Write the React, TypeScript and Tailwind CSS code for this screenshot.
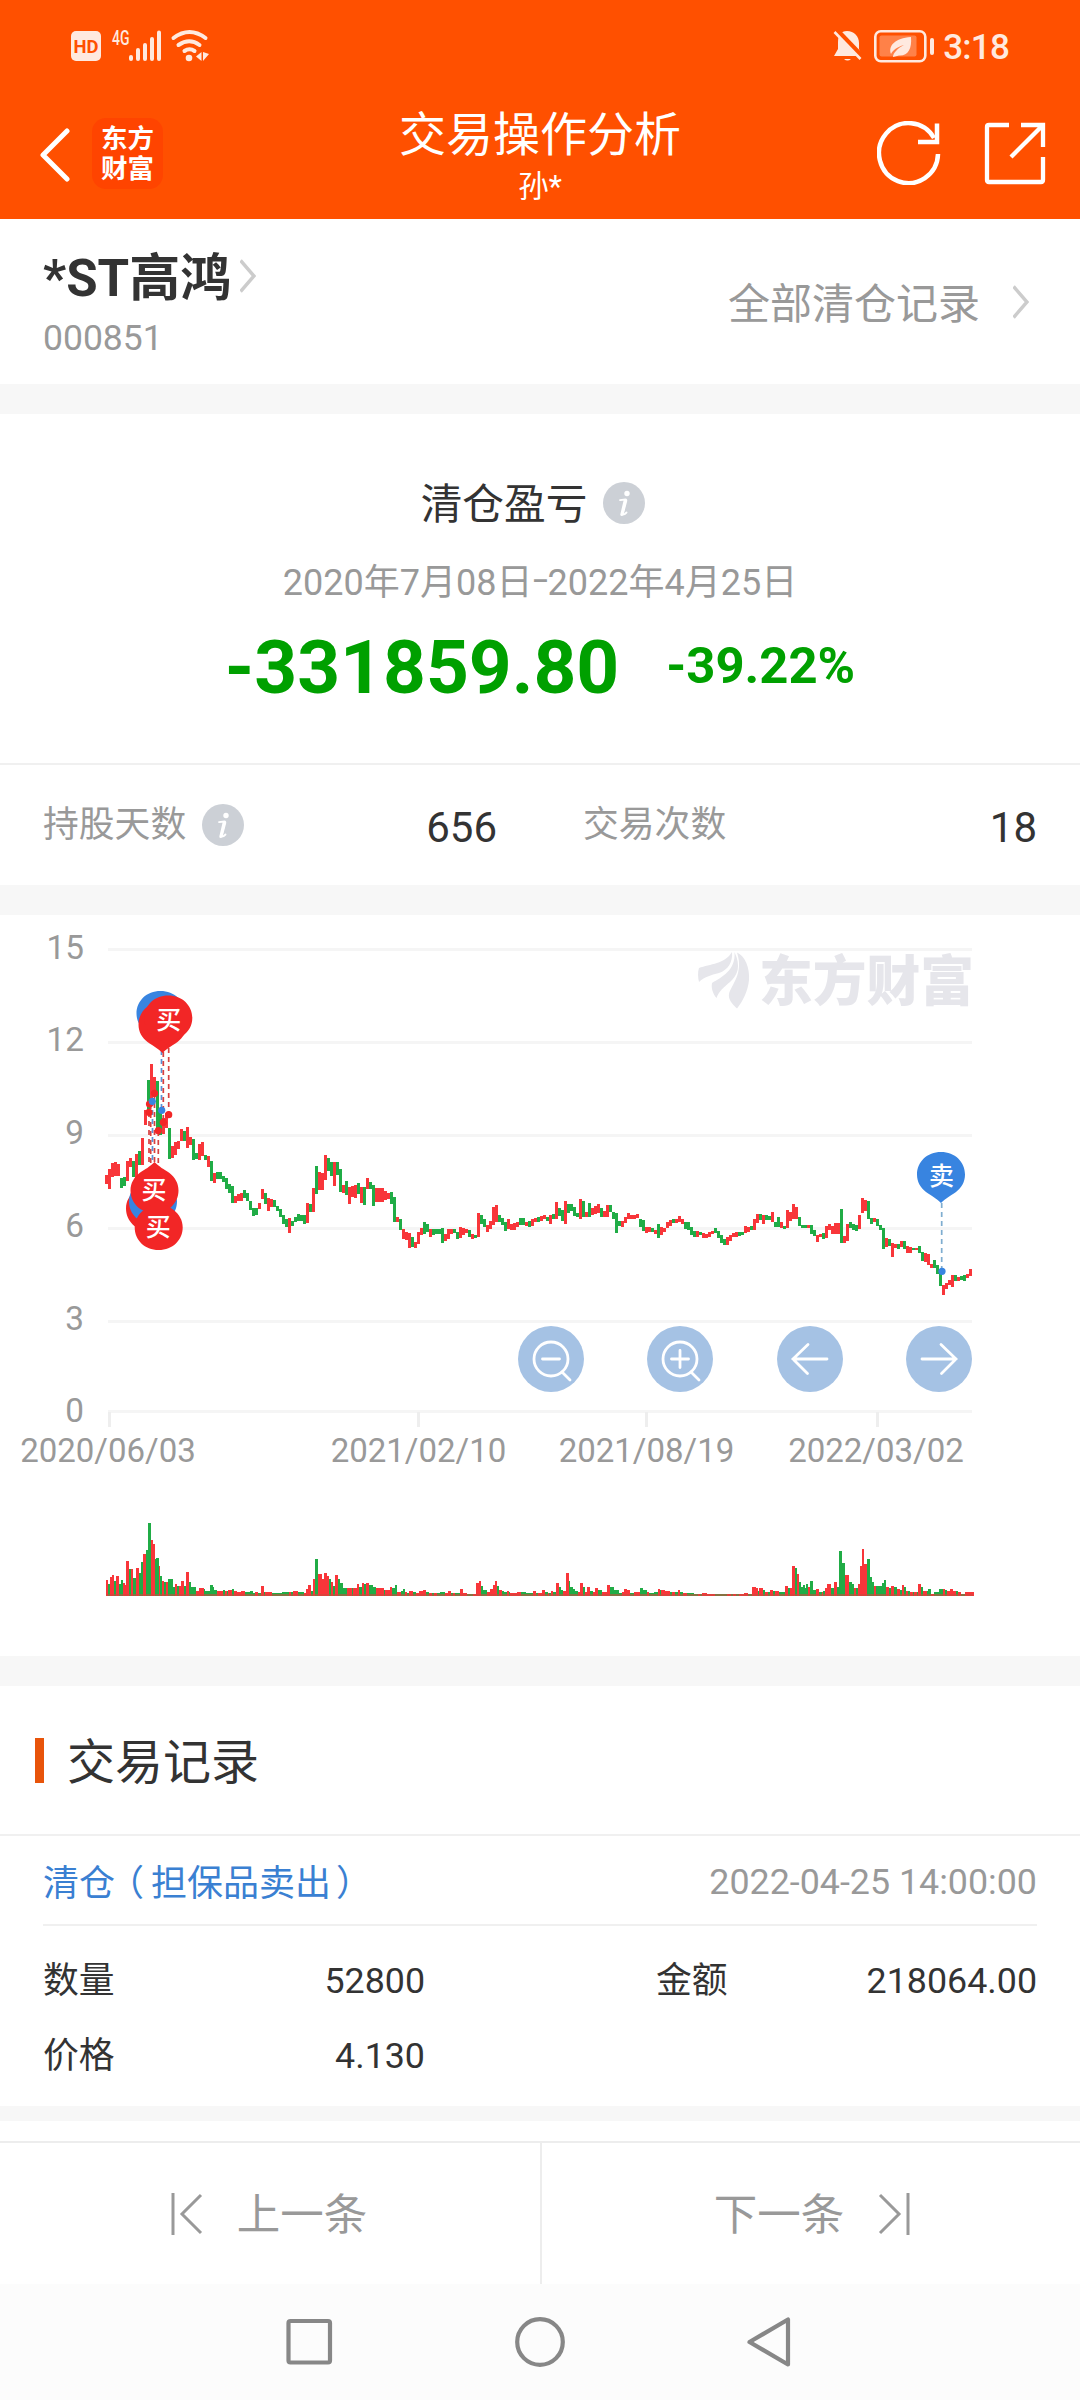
import React from "react";

const RED = "#f8363a";
const GREEN = "#20ac46";

type Bar = { x: number; top: number; bottom: number; up: boolean };

/* Price ranges, one entry per 3px column: "high-low" followed by R (up) or G (down). */
const PRICE_A =
  "825-852R 808-867R 790-830R 787-828R 792-828R 835-865G 830-858G 782-843R 775-802R 782-832G 762-833R 753-795G 713-795R 630-675R 540-640G 492-610R 530-590R 543-690G 640-705G 655-702R 640-685R 683-778G 737-773R 727-765R 722-748R 687-722R 692-724G 682-745R 712-735R 718-780G 758-778G 733-780R 727-768R 765-780G 767-800R 782-842G 820-850R 815-838G 817-838G 828-847G 835-868G 852-880G 858-908G 887-908R 883-902R 880-903R 870-895G 878-904G 902-930G 925-947G 923-945G 910-928R 866-897R 878-912G 895-934R 897-922R 900-922G 917-934G 928-952G 945-972G 957-980G 955-998R 963-978G 950-967G 943-962G 946-963G 945-973G 910-970R 913-937G 865-935R 797-882G 815-870R 818-870R 765-840R 775-812G 785-827G 787-857R 787-825G 807-875G 855-878R 843-886G 860-913R 857-890R 855-895R 848-882G 862-910R 860-915G 835-868R 845-868G 855-918G 865-907R 865-907R 864-905R 872-900R 880-897R 875-912G";
const PRICE_B =
  "290-365G 352-366R 358-390G 387-418R 395-420R 400-443R 410-440G 425-445R 395-432R 385-405R 365-402G 372-395G 387-410R 387-405G 387-402G 388-403G 383-430G 402-424R 386-418R 388-403R 387-400G 397-418G 382-413R 385-405R 388-400R 390-410G 403-417R 404-413G 340-412R 345-372G 357-380G 375-396R 362-388R 320-375R 316-365R 345-367G 355-375G 367-392G 357-388R 372-390R 370-390R 367-382R 354-375G 355-375G 366-378R 363-380G 357-378R 355-367R 350-365G 347-362R 345-357R 350-362G 346-372R 342-357G 307-357R 325-347G 330-364G 304-373R 312-340G 312-333G 322-347G 340-352G 298-356R 302-350G 335-352R 308-350G 325-345R 317-343R 313-338R 325-352G 332-352R 316-350R 316-335G 335-357G 340-398G 362-378G 363-380R 350-368R 340-357R 345-357R 344-357R 343-353R 358-382G 360-392G 382-398R 382-395R 385-397G 390-402R 373-415G 380-405R 384-396R 367-385R 360-377R 356-370G 356-370R 347-367R 357-373R 365-388G 367-390G 380-405G 392-412G 393-410R 395-405G 400-415R 402-415R 396-410R 392-403R 385-398G 393-413G 405-430G 417-435G 410-435R 405-422R 400-412R 397-410R 397-408G 395-405G 377-400R 380-395R 377-390G 358-390R 343-370R";
const PRICE_C =
  "822-840G 826-850R 826-840G 830-840G 818-845R 845-860G 832-860G 845-862R 857-864G 812-862R 818-843R 795-837R 803-838R 832-858G 853-862G 853-862G 853-862R 855-880G 867-885G 882-901R 880-888R 875-892G 857-890R 850-867R 858-880R 848-880R 847-880R 808-903G 885-905R 850-900R 845-862G 850-867G 855-870G 825-865R 778-820R 783-815R 788-838G 833-850G 833-845R 838-857G 853-868G 862-922G 890-915R 893-912G 905-943R 908-918R 908-920G 898-915R 900-920G 912-932R 915-932R 918-925G 917-925R 912-932G 930-955G 933-958R 935-967R 962-975R 953-973G 965-990G 985-1025G 1022-1050R 1015-1032R 1008-1022R 995-1027R 994-1010G 1000-1012R 997-1008G 995-1010G 992-1003R 977-997R";

function candles(src: string, x0: number, y0: number, scale: number): Bar[] {
  return src.split(" ").map((s, i) => {
    const [a, b] = s.slice(0, -1).split("-").map(Number);
    return { x: x0 + i * 3, top: y0 + a / scale, bottom: y0 + b / scale, up: s.endsWith("R") };
  });
}

const PRICES: Bar[] = [
  ...candles(PRICE_A, 105, 900, 3),
  ...candles(PRICE_B, 393, 1100, 3),
  ...candles(PRICE_C, 759, 920, 2.8),
];

/* Volume steps: "start:level" followed by R or G; a step runs up to the next start. */
const VOLUME_A =
  "79:300R 85:312G 91:291R 96:285R 102:304G 107:289R 118:312G 123:301G 129:310R 134:315R 139:244R 148:268G 153:267R 158:294G 167:264R 178:278G 183:245G 188:222R 198:210G 205:130G 213:181R 219:193R 224:238G 228:235G 236:258R 240:288G 246:304R 252:305G 257:307R 264:296G 278:321G 286:313R 292:319G 297:318R 303:302R 312:319G 319:276R 328:307G 334:321G 349:332R 356:323R 372:326G 376:333G 390:314G 398:322G 402:331G 410:332R 428:331G 434:333R 440:332G 445:331R 455:326G 463:332R 470:336R 484:334R 495:335G 510:332G 518:338G 525:336R 534:339G 542:317R 551:335G 556:337R 575:340G 606:335G 618:337G 628:336R 634:337G 640:334R 655:337G 672:338R 678:328R 684:315R 692:332G 700:298R 706:236G 714:283R 725:297R 733:279R 742:287R 747:298G 753:305R 758:318G 766:286R 774:297G 781:310G 790:324G 802:324R 815:324G 820:324R 830:313R 838:320G 846:308R 852:312G 858:309R 866:315G 878:322G 888:324R 912:330G 916:331R 929:322R 936:325G 945:314G 952:337R 962:332G 968:326G 975:337R 982:338G 988:332R 998:337G 1008:339R 1017:334R 1030:330R 1038:337G 1046:338R 1055:339G 1062:339R 1072:339G 1080:335G 1094:338R 1103:332R 1112:338G 1120:339R 1125:340G 1141:328R 1150:338R 1162:342G 1178:343R 1189:310R 1196:303R 1204:319G 1210:329G 1222:336R 1230:328R 1238:315R 1244:304R 1252:319G 1258:331R 1265:333G 1273:335G 1282:333R 1286:336G 1291:338R 1312:335R 1322:335G 1338:339G 1358:334R 1367:339G 1374:339R 1385:330R 1395:336G 1405:338R 1408:338G 1413:332R 1420:335G";
const VOLUME_B =
  "49:309R 57:320G 63:331G 70:332R 77:280R 86:303G 91:322G 98:327G 106:332G 114:336R 120:308R 129:320G 134:336R 142:322R 151:333G 158:337R 164:325R 175:331G 185:336R 201:316R 210:320G 221:329G 236:339G 247:335R 253:328R 262:331R 271:339G 282:337R 300:325G 308:331G 320:337R 326:339G 342:337G 354:326R 360:331G 364:331R 375:333R 390:337G 396:337R 405:337G 413:331R 420:335G 428:338R 440:339G 462:341G 475:342R 480:342G 485:340R 500:342R 515:343R 525:342G 560:342R 572:342G 580:342R 588:343G 598:342R 612:338R 624:341G 637:322R 647:325R 655:332G 658:325R 668:330G 675:335R 684:336G 690:330R 700:334G 706:332R 718:336G 735:318R 745:325G 750:323R 757:257R 766:265G 770:281R 777:307G 783:321G 788:315G 794:323G 798:313G 804:320R 811:302G 820:329G 828:328R 837:335G 845:335R 850:333G 856:325R 862:312R 873:325G 883:307R 892:320G 898:214G 907:249G 914:284R 928:307G 937:311G 942:323R 948:323G 955:313R 960:257R 965:207R 972:251R 981:238G 989:290G 995:306G 1002:317R 1008:317G 1025:308G 1031:300G 1038:322R 1048:325G 1053:318R 1063:321G 1070:328R 1080:330G 1085:314R 1093:322G 1098:333R 1104:332G 1110:335R 1118:335G 1122:336R 1130:335G 1134:313R 1143:320G 1150:333R 1160:333G 1164:326G 1174:341R 1182:337G 1198:326G 1208:328R 1216:330G 1220:333R 1230:328R 1240:333R 1248:334G 1254:335R 1262:341G 1275:336R 1301:348R";

function steps(src: string, x0: number): Bar[] {
  return src.split(" ").map((s) => {
    const [x, y] = s.slice(0, -1).split(":").map(Number);
    return { x: x0 + x / 3, top: 1480 + y / 3, bottom: 1596, up: s.endsWith("R") };
  });
}

const VOLUMES: Bar[] = [...steps(VOLUME_A, 80), ...steps(VOLUME_B, 540)];

const GRID = [
  { y: 949.5, ly: 959, label: "15" },
  { y: 1042.5, ly: 1051, label: "12" },
  { y: 1135.5, ly: 1144, label: "9" },
  { y: 1228.5, ly: 1236.5, label: "6" },
  { y: 1321.5, ly: 1329.5, label: "3" },
  { y: 1411.5, ly: 1422, label: "0" },
];

const TICKS = [
  { x: 109.5, label: "2020/06/03", lx: 108 },
  { x: 418.5, label: "2021/02/10", lx: 418.5 },
  { x: 646.5, label: "2021/08/19", lx: 646.5 },
  { x: 877.5, label: "2022/03/02", lx: 876 },
];

function Pin({ cx, cy, color, label, up = false }: { cx: number; cy: number; color: string; label?: string; up?: boolean }) {
  return (
    <g transform={`translate(${cx} ${cy})`}>
      <path
        transform={up ? "scale(1 -1)" : undefined}
        d="M0-24C14-24 24-14 24-1.500C24 6 20.500 11.500 15 16C9 20 5 22 0 27C-5 22-9 20-15 16C-20.500 11.500-24 6-24-1.500C-24-14-14-24 0-24Z"
        fill={color}
      />
      {label && (
        <text x={up ? -0.5 : 0.5} y={up ? 10 : 9} textAnchor="middle" fontSize="25" fontWeight="500" fill="#fff">
          {label}
        </text>
      )}
    </g>
  );
}

function Dashed({ x, y1, y2, color }: { x: number; y1: number; y2: number; color: string }) {
  return <line x1={x} x2={x} y1={y1} y2={y2} stroke={color} strokeWidth="1.700" strokeDasharray="5 4" />;
}

function Chart() {
  const R = "#f22626";
  const B = "#3884e0";
  return (
    <svg className="block h-[741px] w-[1080px]" viewBox="0 915 1080 741">
      {GRID.map((g) => (
        <g key={g.label}>
          <rect x="108" y={g.y - 1.5} width="864" height="3" fill="#f5f5f5" />
          <text x="84" y={g.ly} textAnchor="end" fontSize="33.300" fill="#999">
            {g.label}
          </text>
        </g>
      ))}
      {TICKS.map((t) => (
        <g key={t.label}>
          <rect x={t.x - 1.5} y="1412" width="3" height="15" fill="#eee" />
          <text x={t.lx} y="1462" textAnchor="middle" fontSize="33" fill="#999">
            {t.label}
          </text>
        </g>
      ))}

      <g fill="#e6e6eb">
        <path d="M732 952C733 962 728 970 719 973C711 975 704 977 699 982C698 978 697.500 972 699 968C710 964 725 964 732 952Z" />
        <path d="M734.500 952C741 966 738 975 730 982C724 987 719 991 716.500 998C713 994 711 988 712 983C722 977 736 970 734.500 952Z" />
        <path d="M737 952.500C745 956 750 968 749 980C748 991 743 1001 737 1008.500C732 1004 728 999 729 994C731 985 744 974 737 952.500Z" />
        <text x="759" y="1000.500" fontSize="54" fontWeight="900" textLength="215" lengthAdjust="spacingAndGlyphs">
          东方财富
        </text>
      </g>

      <g shapeRendering="crispEdges">
        {PRICES.map((b, i) => (
          <rect key={i} x={b.x} y={b.top} width="3" height={b.bottom - b.top} fill={b.up ? RED : GREEN} />
        ))}
        {VOLUMES.slice(0, -1).map((b, i) => (
          <rect key={i} x={b.x} y={b.top} width={VOLUMES[i + 1].x - b.x} height={b.bottom - b.top} fill={b.up ? RED : GREEN} />
        ))}
        <rect x="106" y="1594" width="867" height="2" fill="#c94b3e" opacity="0.600" />
      </g>

      <Dashed x={161.5} y1={1050} y2={1109} color="#5a92d8" />
      <Dashed x={163.3} y1={1052} y2={1121} color="#d84040" />
      <Dashed x={168.7} y1={1048} y2={1114} color="#d84040" />
      <rect x="148" y="1117" width="7" height="46" fill="#fff" />
      <Dashed x={149} y1={1112} y2={1164} color="#d84040" />
      <Dashed x={150.7} y1={1104} y2={1164} color="#d84040" />
      <Dashed x={152.5} y1={1101} y2={1164} color="#5a92d8" />
      <Dashed x={154.5} y1={1094} y2={1164} color="#d84040" />
      <Dashed x={158.3} y1={1131} y2={1164} color="#d84040" />
      <Dashed x={941.7} y1={1203} y2={1268} color="#7fadd0" />
      {[
        [154.5, 1093.3, R],
        [149.5, 1104, R],
        [152.3, 1101.3, B],
        [149, 1112.3, R],
        [161.7, 1110.3, B],
        [163.3, 1122.3, R],
        [168.7, 1114.7, R],
        [158.3, 1130.7, R],
        [942, 1271.3, B],
      ].map(([x, y, c], i) => (
        <circle key={i} cx={x} cy={y} r="3.600" fill={c as string} />
      ))}

      <Pin cx={160.5} cy={1015} color={B} />
      <Pin cx={162.5} cy={1026} color={R} />
      <Pin cx={168.3} cy={1019.5} color={R} label="买" />
      <Pin cx={150} cy={1207} color={R} up />
      <Pin cx={153} cy={1200} color={B} up />
      <Pin cx={154.5} cy={1189} color={R} label="买" up />
      <Pin cx={158.7} cy={1226} color={R} label="买" up />
      <Pin cx={941} cy={1176} color={B} label="卖" />
    </svg>
  );
}

const TOOLS = [
  <>
    <circle cx="33" cy="33" r="17" />
    <path d="M24.500 33h17M44 46l8 8" />
  </>,
  <>
    <circle cx="33" cy="33" r="17" />
    <path d="M24.500 33h17M33 24.500v17M44 46l8 8" />
  </>,
  <path d="M50 33H16M31 18.500L16 33l14.500 14.500" />,
  <path d="M16 33h34M35 18.500L50 33L35.500 47.500" />,
];

function Info() {
  return (
    <svg className="h-[42px] w-[42px] shrink-0" viewBox="0 0 42 42">
      <circle cx="21" cy="21" r="21" fill="#ccd0d6" />
      <circle cx="24" cy="11.500" r="2.700" fill="#fff" />
      <path d="M17 18.200L22.500 17.500Q23.600 17.500 23.300 19L20 31.500Q20 34 23.500 30.500" fill="none" stroke="#fff" strokeWidth="1.800" strokeLinecap="round" strokeLinejoin="round" />
      <path d="M22 19L18.800 32.500" stroke="#fff" strokeWidth="3" strokeLinecap="round" />
    </svg>
  );
}

function Chevron({ className }: { className?: string }) {
  return (
    <svg className={`h-[34px] w-[16px] shrink-0 ${className ?? ""}`} viewBox="0 0 16 34" fill="none" stroke="#ccc" strokeWidth="3.500">
      <path d="M0.500 1.500L14 17L0.500 32.500" />
    </svg>
  );
}

function StatusBar() {
  return (
    <div className="flex h-[92px] items-center justify-between px-[71px]">
      <svg className="h-[34px] w-[140px] overflow-visible" viewBox="0 0 140 34" fill="none">
        <rect x="0" y="2" width="30" height="30" rx="5" fill="#ffe9df" />
        <text x="15" y="24" textAnchor="middle" fontSize="19" fontWeight="700" fill="#ff5000" textLength="25" lengthAdjust="spacingAndGlyphs">
          HD
        </text>
        <text x="41" y="16" fontSize="20" fontWeight="500" fill="#ffe9df" textLength="17.500" lengthAdjust="spacingAndGlyphs">
          4G
        </text>
        <g stroke="#ffe9df" strokeWidth="4" strokeLinecap="round">
          <path d="M60 28V30M67 21V30M74 16V30M81 10V30M88 3.500V30" />
          <path d="M102.500 9Q118.500-3 134.500 9M107.500 16Q118.500 8.500 128.500 16M113.500 22Q118.500 18.500 123.500 22" />
        </g>
        <circle cx="118" cy="29" r="3.300" fill="#ffe9df" />
        <path d="M125 27.500L130.500 23V32ZM132 23V32L138 25Z" fill="#ffe9df" />
      </svg>
      <div className="flex items-center">
        <svg className="h-[34px] w-[104px]" viewBox="0 0 104 34" fill="none">
          <path d="M14 2C21 2 26 7 26 14V20L29 27H1L5 20V13C5 6 8 2 14 2Z" fill="#ffe9df" />
          <path d="M11 30H18Q14.500 33 11 30Z" fill="#ffe9df" />
          <path d="M3 1L30 29" stroke="#ff5000" strokeWidth="6" />
          <path d="M1.500 3L27.500 30" stroke="#ffe9df" strokeWidth="2.600" />
          <rect x="42.300" y="2.300" width="50" height="30" rx="5.500" stroke="#ffe9df" strokeWidth="2.600" />
          <rect x="46.500" y="6.500" width="37" height="21" rx="2" fill="#ff8148" />
          <path d="M78 8C79 20 75 27 66 26.500L60 28C60 24 65 19 71 16C64 18 60 21 58 25C55 17 62 9 78 8Z" fill="#ffe9df" />
          <rect x="97" y="9" width="4" height="17" rx="2" fill="#ffe9df" />
        </svg>
        <span className="mt-[3px] ml-1.5 text-[35px] leading-none font-medium tracking-[-0.8px] text-[#ffe9df]">3:18</span>
      </div>
    </div>
  );
}

function Header() {
  return (
    <header className="h-[219px] bg-[#ff5000] text-white">
      <StatusBar />
      <div className="relative flex h-[127px] items-start justify-between">
        <div className="flex items-start pt-[26px] pl-[39px]">
          <svg className="mt-2.5 h-[54px] w-[32px]" viewBox="0 0 32 54" fill="none" stroke="#fff" strokeWidth="5" strokeLinecap="round" strokeLinejoin="round">
            <path d="M28 3L4 27L28 51" />
          </svg>
          <div className="ml-[21px] flex h-[71px] w-[71px] flex-col items-center justify-center rounded-[14px] bg-[#ff4400] text-[26.500px] leading-[30px] font-bold">
            <span>东方</span>
            <span>财富</span>
          </div>
        </div>
        <div className="absolute inset-x-0 top-0 flex flex-col items-center">
          <h1 className="mt-[13px] text-[47px] leading-[60px] font-normal">交易操作分析</h1>
          <p className="mt-[2px] text-[30.500px] leading-[40px]">孙*</p>
        </div>
        <div className="flex gap-[43px] pt-[29px] pr-[34px]">
          <svg className="h-[64px] w-[64px]" viewBox="0 0 64 64" fill="none" stroke="#fff" strokeWidth="4.500">
            <path d="M61 33A29.500 30 0 1 1 57 17" />
            <path d="M60 2.500V21H41" />
          </svg>
          <svg className="h-[64px] w-[62px]" viewBox="0 0 62 64" fill="none" stroke="#fff" strokeWidth="4.300">
            <path d="M25 4H5Q3 4 3 6V59Q3 61 5 61H57Q59 61 59 59V36" />
            <path d="M37 4H59V26M59 4L27 36" />
          </svg>
        </div>
      </div>
    </header>
  );
}

function StockBar() {
  return (
    <section className="flex h-[165px] justify-between pr-[51px] pl-[43px]">
      <div>
        <div className="flex items-center pt-[30px]">
          <h2 className="text-[51px] leading-[60px] font-bold">*ST高鸿</h2>
          <Chevron className="ml-[9px] -mt-1.5" />
        </div>
        <p className="mt-[7px] text-[35.500px] leading-[44px] text-[#999]">000851</p>
      </div>
      <div className="flex items-center text-[#999]">
        <span className="mt-[6px] text-[42px] leading-[60px]">全部清仓记录</span>
        <Chevron className="ml-[33px]" />
      </div>
    </section>
  );
}

const Band = () => <div className="h-[30px] bg-[#f7f7f7]" />;

function Summary() {
  return (
    <section className="flex h-[471px] flex-col">
      <div className="flex h-[351px] flex-col items-center border-b-2 border-[#f0f0f0]">
        <div className="mt-[62px] mr-[14px] flex items-center">
          <span className="mt-1 text-[41.700px] leading-[50px]">清仓盈亏</span>
          <span className="ml-[16px]"><Info /></span>
        </div>
        <p className="mt-[31px] text-[36px] leading-[44px] text-[#999]">
          2020年7月08日
          <span className="inline-block w-[15px] -translate-y-[3px] scale-x-150 text-center">-</span>
          2022年4月25日
        </p>
        <div className="mt-[23px] flex items-center gap-[47px] font-bold text-[#00a000]">
          <span className="text-[74.800px] leading-[80px]">-331859.80</span>
          <span className="-mt-1 text-[50.800px] leading-[60px]">-39.22%</span>
        </div>
      </div>
      <div className="flex h-[120px] items-center px-[43px] text-[42px] text-[#333]">
        <div className="flex w-[454px] items-center">
          <span className="mt-0.5 text-[35.800px] text-[#999]">持股天数</span>
          <span className="ml-[16px]"><Info /></span>
          <span className="mt-[4px] ml-auto">656</span>
        </div>
        <div className="ml-[86px] flex flex-1 items-center justify-between">
          <span className="mt-0.5 text-[35.800px] text-[#999]">交易次数</span>
          <span className="mt-[4px]">18</span>
        </div>
      </div>
    </section>
  );
}

function Trades() {
  return (
    <section className="h-[420px]">
      <div className="flex h-[150px] items-center border-b-2 border-[#f0f0f0] pl-[35px]">
        <div className="h-[45px] w-[9px] bg-[#e8540a]" />
        <h3 className="mt-[6px] ml-[23px] text-[48px] leading-[60px] font-normal">交易记录</h3>
      </div>
      <div className="mx-[43px] flex h-[90px] items-center justify-between border-b-2 border-[#f0f0f0] pt-[6px] text-[35.800px]">
        <span className="mt-0.5 flex text-[36px] text-[#3a80d2]">
          <span>清仓</span>
          <span className="mr-[7px] ml-[11px] [font-feature-settings:'halt']">（</span>
          <span>担保品卖出</span>
          <span className="ml-[5px] [font-feature-settings:'halt']">）</span>
        </span>
        <span className="text-[#999]">2022-04-25 14:00:00</span>
      </div>
      <div className="grid grid-cols-[382px_381px] justify-between px-[43px] pt-[18px] text-[35.800px] leading-[75px]">
        <div className="flex justify-between"><span>数量</span><span>52800</span></div>
        <div className="flex justify-between"><span>金额</span><span>218064.00</span></div>
        <div className="flex justify-between"><span>价格</span><span>4.130</span></div>
      </div>
    </section>
  );
}

function Pager() {
  return (
    <div className="mt-5 grid h-[143px] grid-cols-[542px_538px] border-t-2 border-[#ededed] text-[43.500px] text-[#999]">
      <button className="flex items-center justify-center gap-[34px] border-r-2 border-[#ededed] pr-0.5">
        <svg className="h-[42px] w-[32px]" viewBox="0 0 32 42" fill="none" stroke="#999" strokeWidth="3">
          <path d="M2 0V42M30 2L11 21L30 40" />
        </svg>
        <span className="mt-[5px]">上一条</span>
      </button>
      <button className="flex items-center justify-center gap-[34px] pl-0.5">
        <span className="mt-[5px]">下一条</span>
        <svg className="h-[42px] w-[32px]" viewBox="0 0 32 42" fill="none" stroke="#999" strokeWidth="3">
          <path d="M30 0V42M2 2L21 21L2 40" />
        </svg>
      </button>
    </div>
  );
}

function NavBar() {
  return (
    <nav className="flex h-[116px] items-center bg-[#fcfcfc] pl-[285px]">
      <svg className="h-[52px] w-[510px]" viewBox="285 2316 510 52" fill="none" stroke="#878787" strokeWidth="4.200" strokeLinejoin="round">
        <rect x="288.500" y="2321" width="41.500" height="41.500" rx="2" />
        <circle cx="540" cy="2342" r="22.800" />
        <path d="M788 2319.500V2364.500L749.500 2342Z" />
      </svg>
    </nav>
  );
}

export default function App() {
  return (
    <div
      lang="zh-CN"
      className="h-[2400px] w-[1080px] overflow-hidden bg-white text-[#333] [font-family:Roboto,'Noto_Sans_CJK_SC',sans-serif]"
    >
      <Header />
      <StockBar />
      <Band />
      <Summary />
      <Band />
      <section className="relative h-[741px]">
        <Chart />
        <div className="absolute top-[411px] left-[518px] flex gap-[63.300px]">
          {TOOLS.map((icon, i) => (
            <button key={i} className="h-[66px] w-[66px] rounded-full bg-[#a5c2e4]">
              <svg className="h-[66px] w-[66px]" viewBox="0 0 66 66" fill="none" stroke="#fff" strokeWidth="2.800" strokeLinecap="round">
                {icon}
              </svg>
            </button>
          ))}
        </div>
      </section>
      <Band />
      <Trades />
      <div className="h-[15px] bg-[#f7f7f7]" />
      <Pager />
      <NavBar />
    </div>
  );
}
